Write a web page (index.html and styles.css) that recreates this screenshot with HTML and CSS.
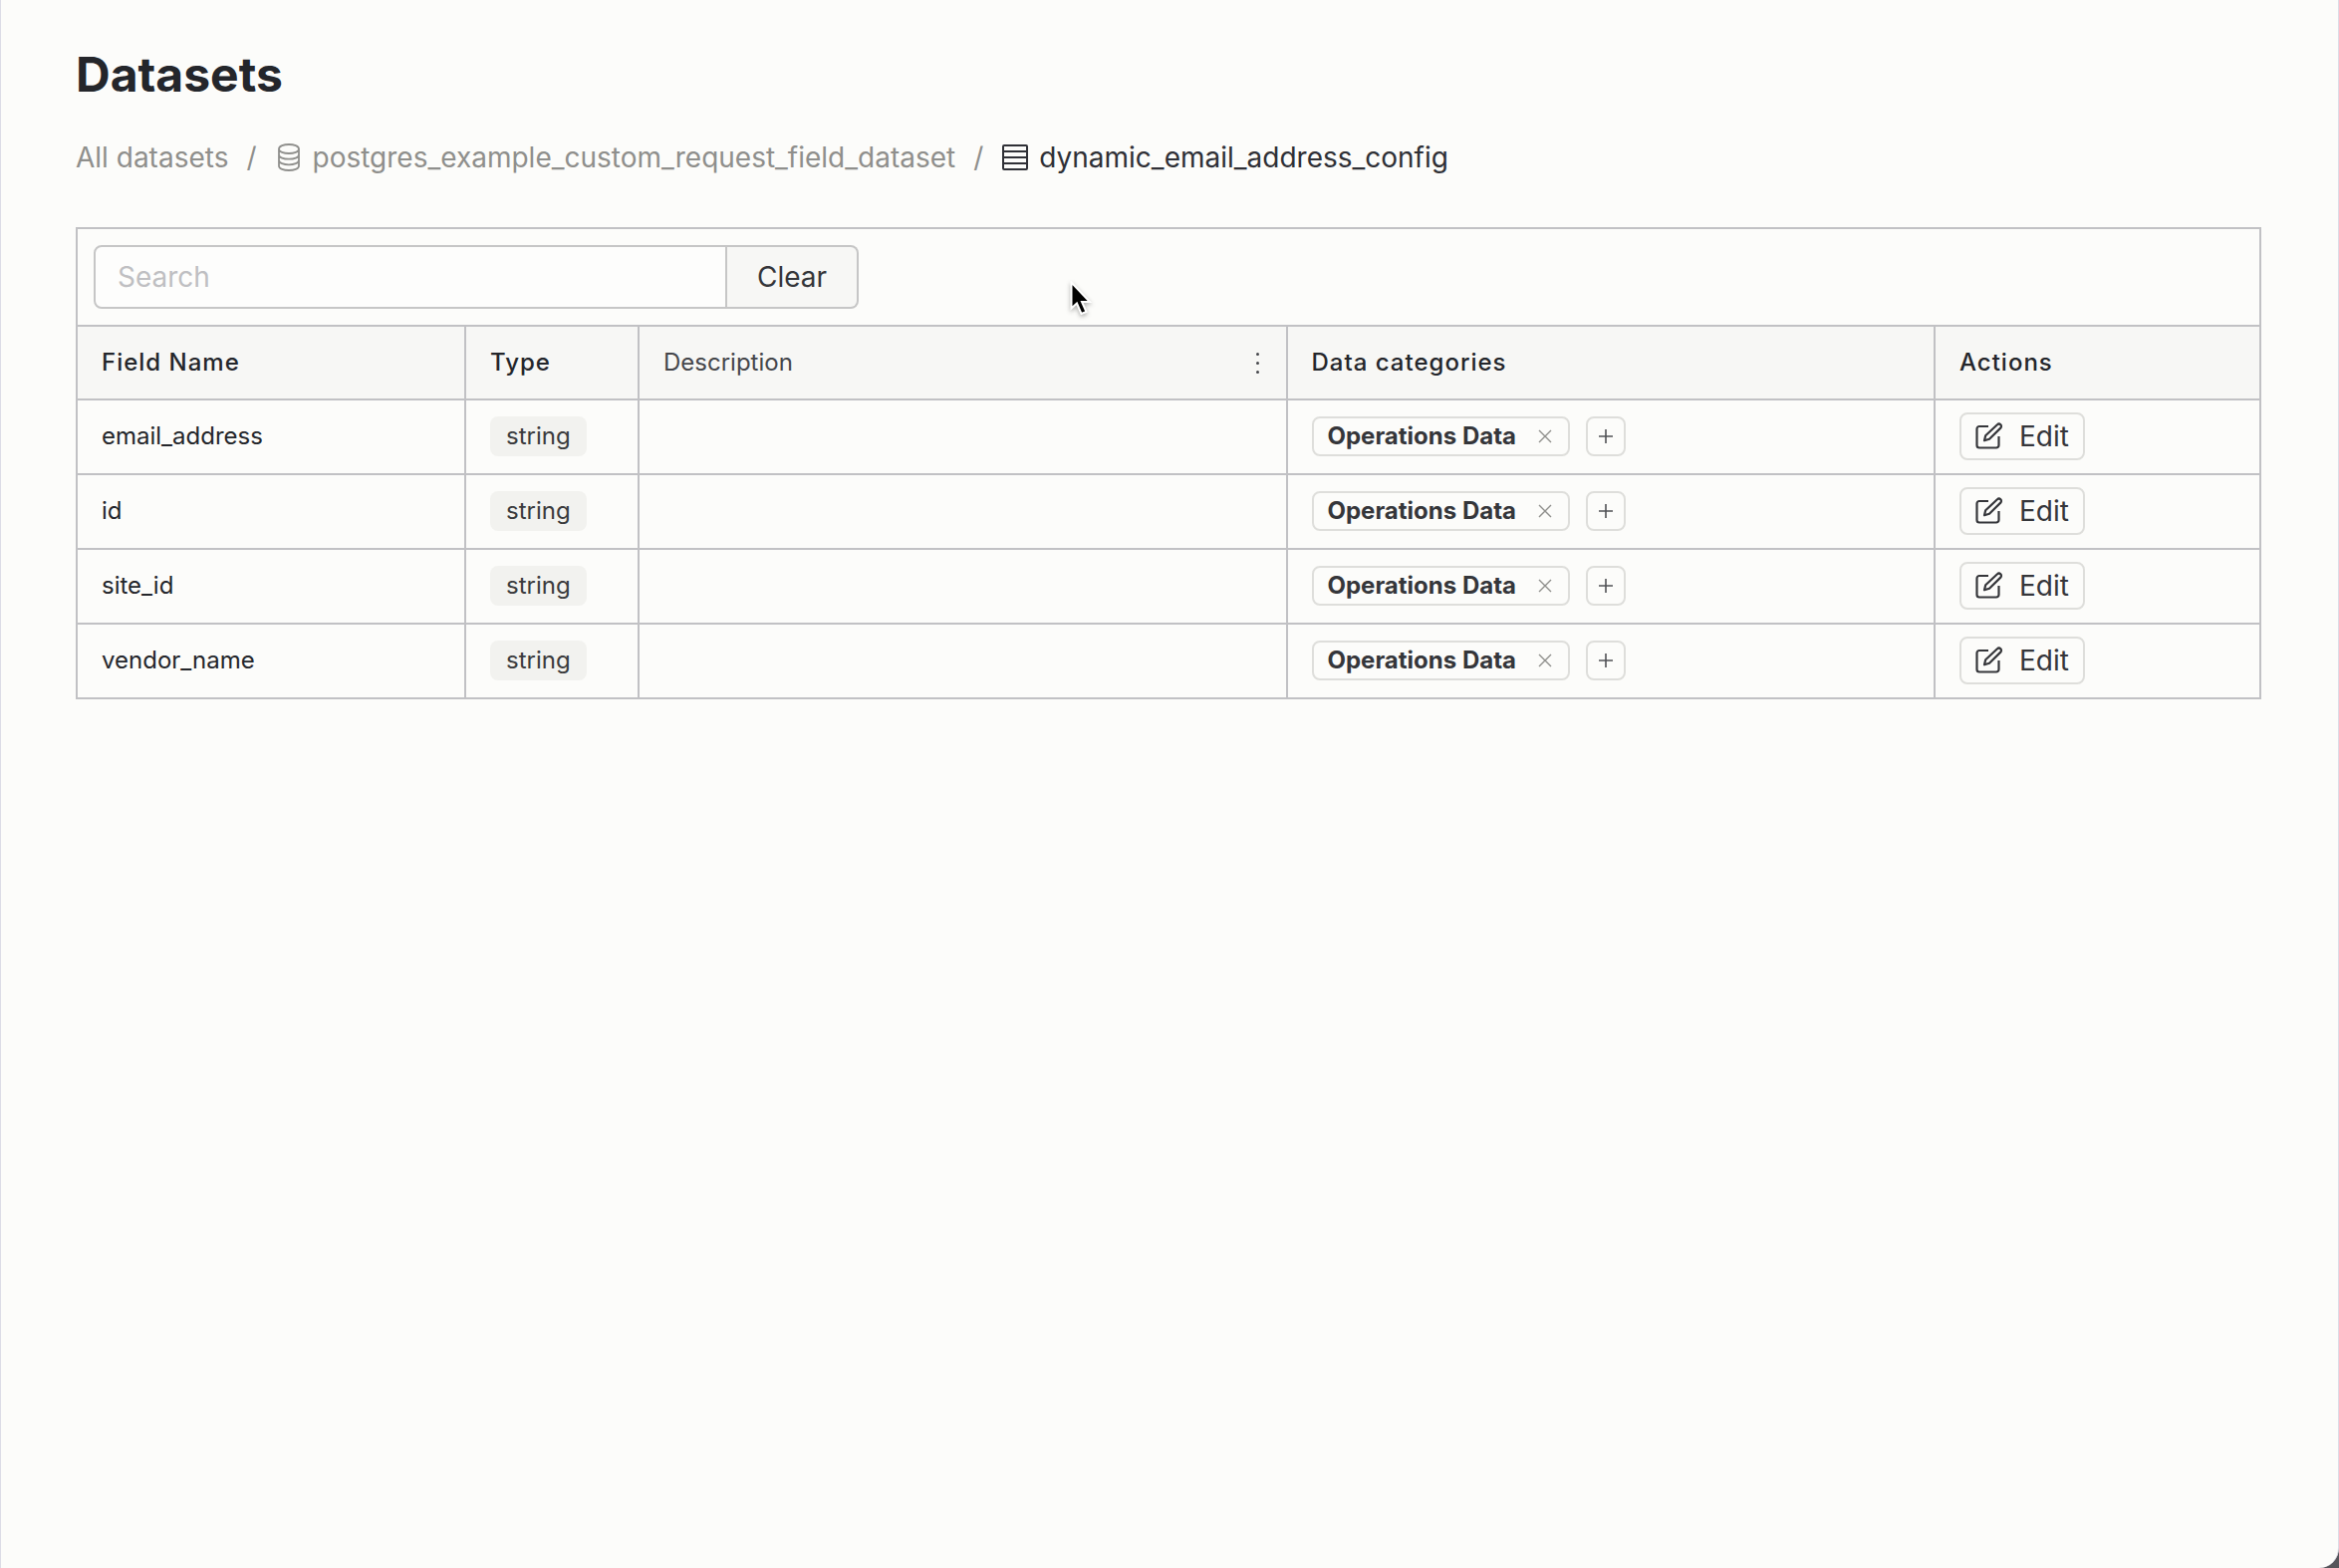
FILE: index.html
```html
<!DOCTYPE html>
<html lang="en">
<head>
<meta charset="utf-8">
<meta name="viewport" content="width=device-width, initial-scale=1">
<title>Datasets</title>
<link rel="stylesheet" href="styles.css">
</head>
<body>
<svg class="sprite" aria-hidden="true">
  <symbol id="icon-database" viewBox="0 0 26 28"><path d="M3 5.500c0-6 20-6 20 0s-20 6-20 0zM3 5.500v17c0 6 20 6 20 0v-17M3 11.200c0 6 20 6 20 0M3 16.800c0 6 20 6 20 0" fill="none" stroke="currentColor" stroke-width="1.800"/></symbol>
  <symbol id="icon-table" viewBox="0 0 28 28"><path d="M3 2h22a1 1 0 0 1 1 1v22a1 1 0 0 1-1 1H3a1 1 0 0 1-1-1V3a1 1 0 0 1 1-1zM2 8h24M2 14h24M2 20h24" fill="none" stroke="currentColor" stroke-width="2"/></symbol>
  <symbol id="icon-edit" viewBox="0 0 28 28"><path d="M13 4H4a2.500 2.500 0 0 0-2.500 2.500V23A2.500 2.500 0 0 0 4 25.500h17a2.500 2.500 0 0 0 2.500-2.500v-9M22 2.300a2.200 2.200 0 0 1 3.300 3.300L14 16.800 9 18.300l1.200-5z" fill="none" stroke="currentColor" stroke-width="2.200" stroke-linejoin="round"/></symbol>
  <symbol id="icon-close" viewBox="0 0 14 14"><path d="M1 1l12 12M13 1L1 13" stroke="currentColor" stroke-width="1.400"/></symbol>
  <symbol id="icon-plus" viewBox="0 0 14 14"><path d="M7 0v14M0 7h14" stroke="currentColor" stroke-width="1.600"/></symbol>
</svg>
<main class="page">
  <h1 class="title">Datasets</h1>
  <nav class="breadcrumb" aria-label="Breadcrumb">
    <a class="crumb" href="#">All datasets</a>
    <span class="slash">/</span>
    <a class="crumb" href="#"><svg class="crumb-icon"><use href="#icon-database"/></svg>postgres_example_custom_request_field_dataset</a>
    <span class="slash">/</span>
    <span class="crumb current"><svg class="crumb-icon"><use href="#icon-table"/></svg>dynamic_email_address_config</span>
  </nav>
  <section class="panel">
    <form class="toolbar">
      <input class="search" type="text" placeholder="Search" aria-label="Search">
      <button class="clear" type="button">Clear</button>
    </form>
    <table class="fields">
      <colgroup><col class="col-name"><col class="col-type"><col><col><col class="col-actions"></colgroup>
      <thead>
        <tr>
          <th>Field Name</th>
          <th>Type</th>
          <th class="plain"><div class="head">Description<button class="menu" type="button" aria-label="Column options"><i></i><i></i><i></i></button></div></th>
          <th>Data categories</th>
          <th>Actions</th>
        </tr>
      </thead>
      <tbody>
        <tr>
          <td>email_address</td><td><span class="type">string</span></td><td></td>
          <td><div class="tags"><span class="tag">Operations Data<button class="remove" type="button" aria-label="Remove"><svg><use href="#icon-close"/></svg></button></span><button class="add" type="button" aria-label="Add category"><svg><use href="#icon-plus"/></svg></button></div></td>
          <td><button class="edit" type="button"><svg><use href="#icon-edit"/></svg>Edit</button></td>
        </tr>
        <tr>
          <td>id</td><td><span class="type">string</span></td><td></td>
          <td><div class="tags"><span class="tag">Operations Data<button class="remove" type="button" aria-label="Remove"><svg><use href="#icon-close"/></svg></button></span><button class="add" type="button" aria-label="Add category"><svg><use href="#icon-plus"/></svg></button></div></td>
          <td><button class="edit" type="button"><svg><use href="#icon-edit"/></svg>Edit</button></td>
        </tr>
        <tr>
          <td>site_id</td><td><span class="type">string</span></td><td></td>
          <td><div class="tags"><span class="tag">Operations Data<button class="remove" type="button" aria-label="Remove"><svg><use href="#icon-close"/></svg></button></span><button class="add" type="button" aria-label="Add category"><svg><use href="#icon-plus"/></svg></button></div></td>
          <td><button class="edit" type="button"><svg><use href="#icon-edit"/></svg>Edit</button></td>
        </tr>
        <tr>
          <td>vendor_name</td><td><span class="type">string</span></td><td></td>
          <td><div class="tags"><span class="tag">Operations Data<button class="remove" type="button" aria-label="Remove"><svg><use href="#icon-close"/></svg></button></span><button class="add" type="button" aria-label="Add category"><svg><use href="#icon-plus"/></svg></button></div></td>
          <td><button class="edit" type="button"><svg><use href="#icon-edit"/></svg>Edit</button></td>
        </tr>
      </tbody>
    </table>
  </section>
</main>
<svg class="pointer" viewBox="0 0 24 36" aria-hidden="true"><path d="M1.500 1.500v26l5.500-5 4.500 10.500 5-2-4.500-10h8z" fill="#000" stroke="#fff" stroke-width="2"/></svg>
</body>
</html>
```
FILE: styles.css
```css
* {
  box-sizing: border-box;
}

html {
  background: #55555a;
}

body {
  margin: 0;
  color: #24262b;
  font-family: Inter, "Liberation Sans", sans-serif;
  font-size: 24px;
  line-height: 40px;
}

button,
input {
  margin: 0;
  padding: 0;
  border: 0;
  background: none;
  color: inherit;
  font: inherit;
}

.sprite {
  display: none;
}

.page {
  min-height: 100vh;
  padding: 43px 77px 43px 75px;
  border: 1px solid #dcdce6;
  border-width: 0 1px;
  border-bottom-right-radius: 20px;
  background: #fcfcfa;
}

.title {
  margin: 0;
  font-size: 48px;
  font-weight: 700;
  line-height: 64px;
}

.breadcrumb {
  display: flex;
  align-items: center;
  gap: 18px;
  margin: 31px 0 50px;
  color: #8f8f8c;
  font-size: 28px;
}

.crumb {
  display: flex;
  align-items: center;
  gap: 10px;
  color: inherit;
  text-decoration: none;
}

.current {
  color: #2f3036;
}

.crumb-icon {
  width: 28px;
  height: 28px;
}

.panel {
  border: 2px solid #c1c1c4;
}

.toolbar {
  display: flex;
  padding: 16px;
}

.search {
  width: 636px;
  height: 64px;
  padding: 0 22px;
  border: 2px solid #c6c6c6;
  border-radius: 8px 0 0 8px;
  background: #fdfdfc;
}

.search,
.clear {
  font-size: 28px;
}

.search::placeholder {
  color: #bfbfc2;
  opacity: 1;
}

.clear {
  width: 132px;
  border: 2px solid #c6c6c6;
  border-left: 0;
  border-radius: 0 8px 8px 0;
  background: #f7f7f5;
  color: #35363a;
}

.fields {
  width: 100%;
  border-collapse: separate;
  border-spacing: 0;
  border-top: 2px solid #c1c1c4;
  table-layout: fixed;
}

.col-name {
  width: 390px;
}

.col-type {
  width: 174px;
}

.col-actions {
  width: 325px;
}

th,
td {
  height: 75px;
  padding: 0 24px 2px;
  border: 0 solid #c1c1c4;
  border-width: 0 2px 2px 0;
  text-align: left;
  vertical-align: middle;
}

th {
  height: 74px;
  padding-bottom: 0;
  background: #f7f7f5;
  font-weight: 500;
  letter-spacing: 1px;
}

th:last-child,
td:last-child {
  border-right: 0;
}

tr:last-child td {
  height: 73px;
  border-bottom: 0;
}

.fields thead th {
  border-bottom-width: 2px;
}

.plain {
  color: #45464b;
  font-weight: 400;
  letter-spacing: 0;
}

.head {
  display: flex;
  align-items: center;
  justify-content: space-between;
}

.menu {
  display: flex;
  flex-direction: column;
  align-items: center;
  gap: 6px;
  width: 8px;
}

.menu i {
  width: 3px;
  height: 3px;
  border-radius: 50%;
  background: #45464b;
}

.type {
  display: inline-block;
  padding: 0 16px;
  border-radius: 8px;
  background: #f2f2ef;
  color: #3a3b3d;
  vertical-align: middle;
}

.tags {
  display: flex;
  align-items: center;
  gap: 16px;
}

.tag {
  display: flex;
  align-items: center;
  gap: 22px;
  height: 40px;
  padding: 0 16px 0 14px;
  border: 2px solid #dededb;
  border-radius: 8px;
  color: #35363a;
  font-weight: 700;
}

.remove {
  display: flex;
  color: #8f8f8c;
}

.remove svg,
.add svg {
  width: 14px;
  height: 14px;
}

.add {
  display: flex;
  align-items: center;
  justify-content: center;
  width: 40px;
  height: 40px;
  border: 2px solid #dededb;
  border-radius: 8px;
  color: #505155;
}

.edit {
  display: flex;
  align-items: center;
  gap: 16px;
  height: 48px;
  padding: 0 14px;
  border: 2px solid #dededb;
  border-radius: 8px;
  color: #35363a;
  font-size: 28px;
}

.edit svg {
  width: 28px;
  height: 28px;
}

.pointer {
  position: absolute;
  top: 282px;
  left: 1074px;
  width: 24px;
  height: 36px;
  filter: drop-shadow(0 2px 2px rgba(0, 0, 0, 0.3));
}
```
